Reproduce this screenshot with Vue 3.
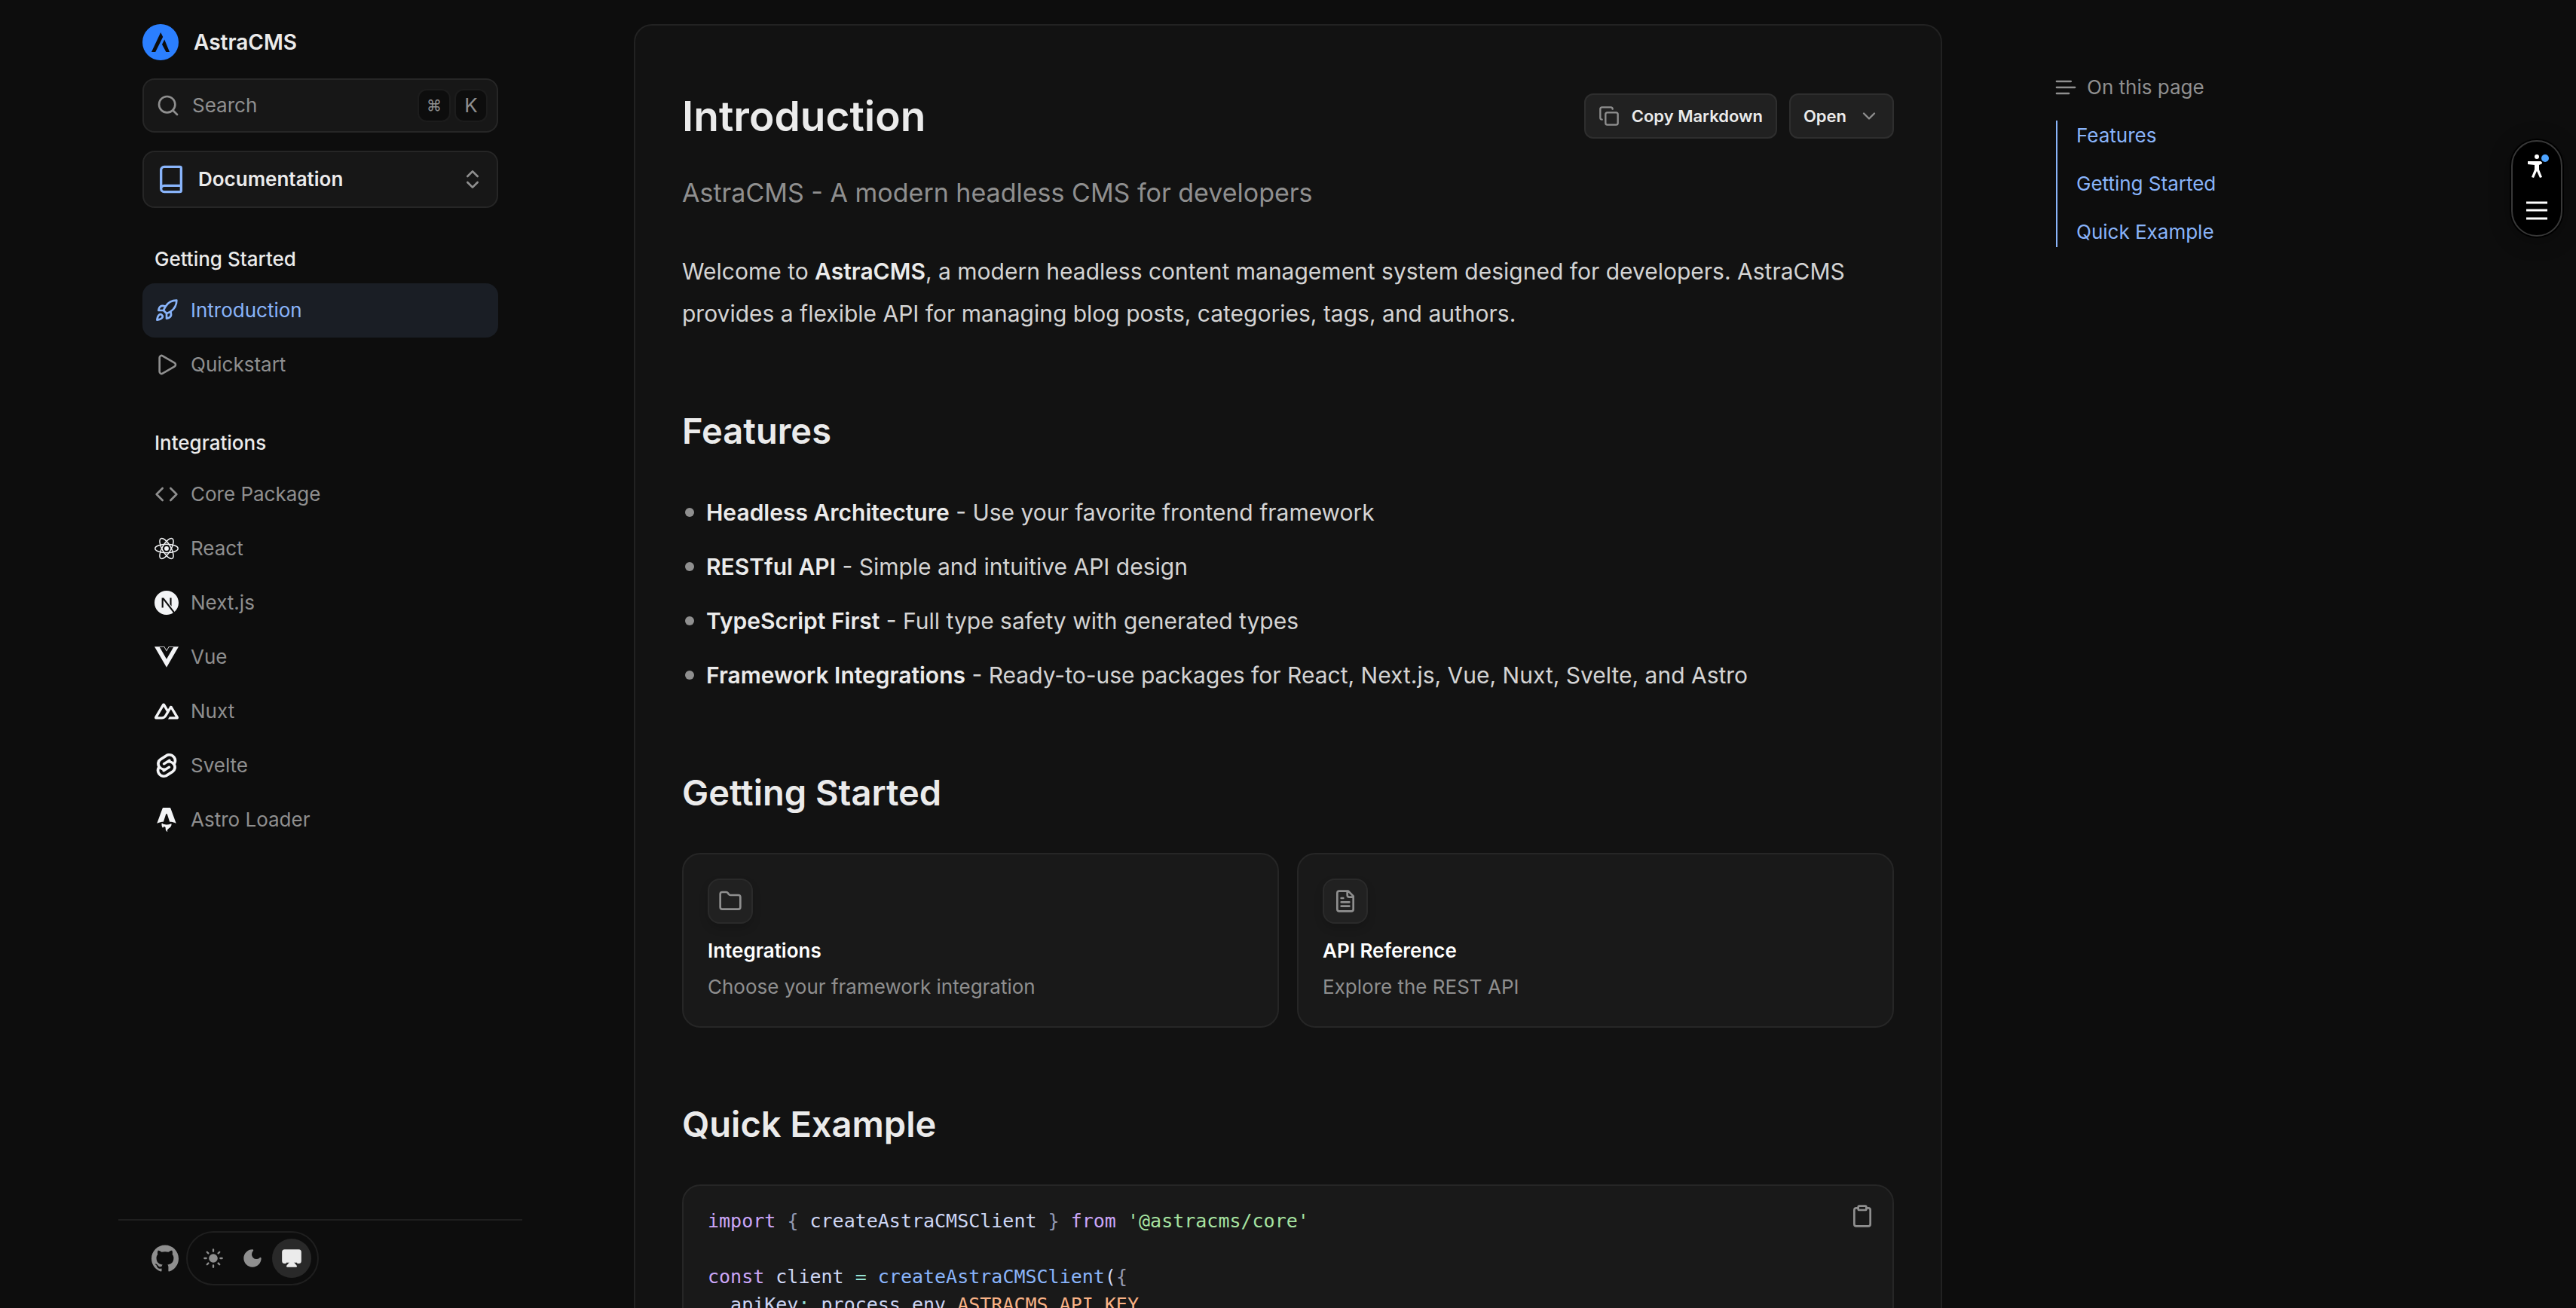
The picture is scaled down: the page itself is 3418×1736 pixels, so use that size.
<template>
  <div class="page">
    <div class="layout">
      <aside class="sidebar">
        <a class="brand" href="#">
          <svg class="logo" viewBox="0 0 48 48" aria-hidden="true">
            <circle cx="24" cy="24" r="24" fill="#2b7fff" />
            <path d="M24.2 11 27.2 17 17.2 37H12ZM29.2 20.5 36 37H31.4L26 27Z" fill="#0d0d0d" />
          </svg>
          <span>AstraCMS</span>
        </a>

        <button class="search" type="button">
          <svg class="icon" viewBox="0 0 24 24"><circle cx="11" cy="11" r="8" /><path d="m21 21-4.34-4.34" /></svg>
          <span class="search-text">Search</span>
          <kbd class="cmd">⌘</kbd>
          <kbd>K</kbd>
        </button>

        <div class="switcher">
          <svg class="icon book" viewBox="0 0 24 24">
            <path d="M4 19.5v-15A2.5 2.5 0 0 1 6.5 2H19a1 1 0 0 1 1 1v18a1 1 0 0 1-1 1H6.5a1 1 0 0 1 0-5H20" />
          </svg>
          <select v-model="section" aria-label="Section">
            <option>Documentation</option>
          </select>
          <svg class="icon" viewBox="0 0 24 24"><path d="m7 15 5 5 5-5M7 9l5-5 5 5" /></svg>
        </div>

        <nav v-for="group in groups" :key="group.title" class="group">
          <h4>{{ group.title }}</h4>
          <a
            v-for="item in group.items"
            :key="item.label"
            href="#"
            class="item"
            :class="{ active: item.label === current }"
          >
            <svg class="icon" :class="{ brandmark: item.fill }" viewBox="0 0 24 24">
              <template v-if="item.label === 'React'">
                <circle cx="12" cy="12" r="2.2" />
                <g fill="none" stroke="currentColor" stroke-width="1.1">
                  <ellipse cx="12" cy="12" rx="11.4" ry="4.3" />
                  <ellipse cx="12" cy="12" rx="11.4" ry="4.3" transform="rotate(60 12 12)" />
                  <ellipse cx="12" cy="12" rx="11.4" ry="4.3" transform="rotate(120 12 12)" />
                </g>
              </template>
              <path v-else :d="item.icon" />
            </svg>
            <span>{{ item.label }}</span>
          </a>
        </nav>

        <div class="sidebar-footer">
          <a class="github" href="#" aria-label="GitHub">
            <svg viewBox="0 0 24 24">
              <path d="M12 .297c-6.63 0-12 5.373-12 12 0 5.303 3.438 9.8 8.205 11.385.6.113.82-.258.82-.577 0-.285-.01-1.04-.015-2.04-3.338.724-4.042-1.61-4.042-1.61C4.422 18.07 3.633 17.7 3.633 17.7c-1.087-.744.084-.729.084-.729 1.205.084 1.838 1.236 1.838 1.236 1.07 1.835 2.809 1.305 3.495.998.108-.776.417-1.305.76-1.605-2.665-.3-5.466-1.332-5.466-5.93 0-1.31.465-2.38 1.235-3.22-.135-.303-.54-1.523.105-3.176 0 0 1.005-.322 3.3 1.23.96-.267 1.98-.399 3-.405 1.02.006 2.04.138 3 .405 2.28-1.552 3.285-1.23 3.285-1.23.645 1.653.24 2.873.12 3.176.765.84 1.23 1.91 1.23 3.22 0 4.61-2.805 5.625-5.475 5.92.42.36.81 1.096.81 2.22 0 1.606-.015 2.896-.015 3.286 0 .315.21.69.825.57C20.565 22.092 24 17.592 24 12.297c0-6.627-5.373-12-12-12" />
            </svg>
          </a>
          <div class="themes">
            <button
              v-for="t in themes"
              :key="t.name"
              type="button"
              :aria-label="t.name"
              :class="{ on: theme === t.name }"
              @click="theme = t.name"
            >
              <svg viewBox="0 0 24 24"><path :d="t.icon" /></svg>
            </button>
          </div>
        </div>
      </aside>

      <main class="content">
        <article class="card">
          <header class="title-row">
            <h1>Introduction</h1>
            <div class="actions">
              <button type="button">
                <svg class="icon" viewBox="0 0 24 24">
                  <rect x="8" y="8" width="14" height="14" rx="2" />
                  <path d="M4 16c-1.1 0-2-.9-2-2V4c0-1.1.9-2 2-2h10c1.1 0 2 .9 2 2" />
                </svg>
                Copy Markdown
              </button>
              <button type="button">
                Open
                <svg class="icon" viewBox="0 0 24 24"><path d="m6 9 6 6 6-6" /></svg>
              </button>
            </div>
          </header>
          <p class="lead">AstraCMS - A modern headless CMS for developers</p>
          <p class="intro">
            Welcome to <strong>AstraCMS</strong>, a modern headless content management system designed for developers. AstraCMS provides a flexible API for managing blog posts, categories, tags, and authors.
          </p>

          <h2>Features</h2>
          <ul class="features">
            <li v-for="f in features" :key="f.name">
              <span><strong>{{ f.name }}</strong> - {{ f.text }}</span>
            </li>
          </ul>

          <h2>Getting Started</h2>
          <div class="links">
            <a v-for="l in links" :key="l.title" href="#" class="link-card">
              <span class="link-icon">
                <svg class="icon" viewBox="0 0 24 24"><path :d="l.icon" /></svg>
              </span>
              <span class="link-title">{{ l.title }}</span>
              <span class="link-text">{{ l.text }}</span>
            </a>
          </div>

          <h2>Quick Example</h2>
          <div class="code">
            <pre><code><span class="kw">import</span> <span class="pn">{</span> createAstraCMSClient <span class="pn">}</span> <span class="kw">from</span> <span class="str">'@astracms/core'</span>

<span class="kw">const</span> client <span class="op">=</span> <span class="fn">createAstraCMSClient</span>(<span class="pn">{</span>
  apiKey<span class="op">:</span> process.env.<span class="cn">ASTRACMS_API_KEY</span></code></pre>
            <button type="button" class="copy" aria-label="Copy">
              <svg class="icon" viewBox="0 0 24 24">
                <rect x="8" y="2" width="8" height="4" rx="1" />
                <path d="M16 4h2a2 2 0 0 1 2 2v14a2 2 0 0 1-2 2H6a2 2 0 0 1-2-2V6a2 2 0 0 1 2-2h2" />
              </svg>
            </button>
          </div>
        </article>
      </main>

      <aside class="toc">
        <h3>
          <svg class="icon" viewBox="0 0 24 24"><path d="M15 18H3M17 6H3M21 12H3" /></svg>
          On this page
        </h3>
        <nav>
          <a v-for="t in toc" :key="t" href="#">{{ t }}</a>
        </nav>
      </aside>
    </div>

    <div class="widget">
      <button type="button" aria-label="Accessibility">
        <svg viewBox="0 0 32 36">
          <circle cx="16" cy="6" r="3" fill="#fff" />
          <path d="M4 12h19v3l-4 2v6l4 10-3 1-4-9-4 9-3-1 4-10v-6l-9-1z" fill="#fff" />
          <circle cx="27" cy="8" r="7" fill="#000" />
          <circle cx="27" cy="8" r="5" fill="#4da3ff" />
        </svg>
      </button>
      <button type="button" aria-label="Menu">
        <svg viewBox="0 0 32 36">
          <path d="M2 7H30M2 17H30M2 28H30" stroke="#fff" stroke-width="3" />
        </svg>
      </button>
    </div>
  </div>
</template>

<script setup>
import { ref } from 'vue'

const section = ref('Documentation')
const current = ref('Introduction')
const theme = ref('System')

const groups = [
  {
    title: 'Getting Started',
    items: [
      {
        label: 'Introduction',
        icon: 'M4.5 16.5c-1.5 1.26-2 5-2 5s3.74-.5 5-2c.71-.84.7-2.13-.09-2.91a2.18 2.18 0 0 0-2.91-.09zM12 15l-3-3a22 22 0 0 1 2-3.95A12.88 12.88 0 0 1 22 2c0 2.72-.78 7.5-6 11a22.35 22.35 0 0 1-4 2zM9 12H4s.55-3.03 2-4c1.62-1.08 5 0 5 0M12 15v5s3.03-.55 4-2c1.08-1.62 0-5 0-5'
      },
      {
        label: 'Quickstart',
        icon: 'M5 5a2 2 0 0 1 3.008-1.728l11.997 6.998a2 2 0 0 1 .003 3.458l-12 7A2 2 0 0 1 5 19z'
      }
    ]
  },
  {
    title: 'Integrations',
    items: [
      { label: 'Core Package', icon: 'm16 18 6-6-6-6M8 6l-6 6 6 6' },
      { label: 'React', fill: true },
      {
        label: 'Next.js',
        fill: true,
        icon: 'M18.665 21.978C16.758 23.255 14.465 24 12 24 5.377 24 0 18.623 0 12S5.377 0 12 0s12 5.377 12 12c0 3.583-1.574 6.801-4.067 9.001L9.219 7.2H7.2v9.596h1.615V9.251l9.85 12.727Zm-3.332-8.533 1.6 2.061V7.2h-1.6v6.245Z'
      },
      {
        label: 'Vue',
        fill: true,
        icon: 'M24 1.61H14.06L12 5.16 9.94 1.61H0L12 22.39ZM12 14.08 5.16 2.23H9.59L12 6.41l2.41-4.18h4.43Z'
      },
      {
        label: 'Nuxt',
        fill: true,
        icon: 'M13.4642 19.8295h8.9218c.2834 0 .5618-.0723.8072-.2098a1.5899 1.5899 0 0 0 .5908-.5732 1.5293 1.5293 0 0 0 .216-.783 1.529 1.529 0 0 0-.2167-.7828L17.7916 7.4142a1.5904 1.5904 0 0 0-.5907-.573 1.6524 1.6524 0 0 0-.807-.2099c-.2833 0-.5616.0724-.807.2098a1.5904 1.5904 0 0 0-.5907.5731L13.4642 9.99l-2.9954-5.0366a1.5913 1.5913 0 0 0-.591-.573 1.6533 1.6533 0 0 0-.8071-.2098c-.2834 0-.5617.0723-.8072.2097a1.5913 1.5913 0 0 0-.591.573L.2168 17.4808A1.5292 1.5292 0 0 0 0 18.2635c-.0001.2749.0744.545.216.783a1.59 1.59 0 0 0 .5908.5732c.2454.1375.5238.2098.8072.2098h5.6003c2.219 0 3.8554-.9454 4.9813-2.7899l2.7337-4.5922L16.3935 9.99l4.3944 7.382h-5.8586ZM7.123 17.3694l-3.9083-.0009 5.8586-9.8421 2.9232 4.921-1.9572 3.2897c-.7478 1.1967-1.5972 1.6323-2.9163 1.6323z'
      },
      {
        label: 'Svelte',
        fill: true,
        icon: 'M10.354 21.125a4.44 4.44 0 0 1-4.765-1.767 4.109 4.109 0 0 1-.703-3.107 3.898 3.898 0 0 1 .134-.522l.105-.321.287.21a7.21 7.21 0 0 0 2.186 1.092l.208.063-.02.208a1.253 1.253 0 0 0 .226.83 1.337 1.337 0 0 0 1.435.533 1.231 1.231 0 0 0 .343-.15l5.59-3.562a1.164 1.164 0 0 0 .524-.778 1.242 1.242 0 0 0-.211-.937 1.338 1.338 0 0 0-1.435-.533 1.23 1.23 0 0 0-.343.15l-2.133 1.36a4.078 4.078 0 0 1-1.135.499 4.44 4.44 0 0 1-4.765-1.766 4.108 4.108 0 0 1-.702-3.108 3.855 3.855 0 0 1 1.742-2.582l5.589-3.563a4.072 4.072 0 0 1 1.135-.499 4.44 4.44 0 0 1 4.765 1.767 4.109 4.109 0 0 1 .703 3.107 3.943 3.943 0 0 1-.134.522l-.105.321-.286-.21a7.204 7.204 0 0 0-2.187-1.093l-.208-.063.02-.207a1.255 1.255 0 0 0-.226-.831 1.337 1.337 0 0 0-1.435-.532 1.231 1.231 0 0 0-.343.15L8.62 9.368a1.162 1.162 0 0 0-.524.778 1.24 1.24 0 0 0 .211.937 1.338 1.338 0 0 0 1.435.533 1.235 1.235 0 0 0 .344-.151l2.132-1.36a4.067 4.067 0 0 1 1.135-.498 4.44 4.44 0 0 1 4.765 1.766 4.108 4.108 0 0 1 .702 3.108 3.857 3.857 0 0 1-1.742 2.583l-5.589 3.562a4.072 4.072 0 0 1-1.135.499m10.358-17.95C18.484-.015 14.082-.96 10.9 1.068L5.31 4.63a6.412 6.412 0 0 0-2.896 4.295 6.753 6.753 0 0 0 .666 4.336 6.43 6.43 0 0 0-.96 2.396 6.833 6.833 0 0 0 1.168 5.167c2.229 3.19 6.63 4.135 9.812 2.108l5.59-3.562a6.41 6.41 0 0 0 2.896-4.295 6.756 6.756 0 0 0-.665-4.336 6.429 6.429 0 0 0 .958-2.396 6.831 6.831 0 0 0-1.167-5.168Z'
      },
      {
        label: 'Astro Loader',
        fill: true,
        icon: 'M8.358 20.162c-1.186-1.07-1.532-3.316-1.038-4.944.856 1.026 2.043 1.352 3.272 1.535 1.897.283 3.76.177 5.522-.678.202-.098.388-.229.608-.36.166.473.209.95.151 1.437-.14 1.185-.738 2.1-1.688 2.794-.38.277-.782.525-1.175.787-1.205.804-1.531 1.747-1.078 3.119l.044.148a3.158 3.158 0 0 1-1.407-1.188 3.31 3.31 0 0 1-.544-1.815c-.004-.32-.004-.642-.048-.958-.106-.769-.472-1.113-1.161-1.133-.707-.02-1.267.411-1.415 1.09-.012.053-.028.104-.045.165h.002zm-5.961-4.445s3.24-1.575 6.49-1.575l2.451-7.565c.092-.366.36-.614.662-.614.302 0 .57.248.662.614l2.45 7.565c3.85 0 6.491 1.575 6.491 1.575L16.088.727C15.93.285 15.663 0 15.303 0H8.697c-.36 0-.615.285-.784.727l-5.516 14.99z'
      }
    ]
  }
]

const themes = [
  {
    name: 'Light',
    icon: 'M16 12a4 4 0 1 1-8 0 4 4 0 0 1 8 0zM12 2v2M12 20v2M4.93 4.93l1.41 1.41M17.66 17.66l1.41 1.41M2 12h2M20 12h2M6.34 17.66l-1.41 1.41M19.07 4.93l-1.41 1.41'
  },
  { name: 'Dark', icon: 'M12 3a6 6 0 0 0 9 9 9 9 0 1 1-9-9Z' },
  {
    name: 'System',
    icon: 'M5 17H4a2 2 0 0 1-2-2V5a2 2 0 0 1 2-2h16a2 2 0 0 1 2 2v10a2 2 0 0 1-2 2h-1M12 15l5 6H7Z'
  }
]

const features = [
  { name: 'Headless Architecture', text: 'Use your favorite frontend framework' },
  { name: 'RESTful API', text: 'Simple and intuitive API design' },
  { name: 'TypeScript First', text: 'Full type safety with generated types' },
  { name: 'Framework Integrations', text: 'Ready-to-use packages for React, Next.js, Vue, Nuxt, Svelte, and Astro' }
]

const links = [
  {
    title: 'Integrations',
    text: 'Choose your framework integration',
    icon: 'M20 20a2 2 0 0 0 2-2V8a2 2 0 0 0-2-2h-7.9a2 2 0 0 1-1.69-.9L9.6 3.9A2 2 0 0 0 7.93 3H4a2 2 0 0 0-2 2v13a2 2 0 0 0 2 2Z'
  },
  {
    title: 'API Reference',
    text: 'Explore the REST API',
    icon: 'M15 2H6a2 2 0 0 0-2 2v16a2 2 0 0 0 2 2h12a2 2 0 0 0 2-2V7ZM14 2v4a2 2 0 0 0 2 2h4M10 9H8M16 13H8M16 17H8'
  }
]

const toc = ['Features', 'Getting Started', 'Quick Example']
</script>

<style>
body {
  background: #0d0d0d;
}
</style>

<style scoped>
.page {
  height: 100vh;
  overflow: hidden;
  background: #0d0d0d;
  color: #ebebeb;
  font-family: Inter, "Liberation Sans", sans-serif;
  font-size: 26px;
  line-height: 40px;
}
.page * {
  box-sizing: border-box;
}
a {
  color: inherit;
  text-decoration: none;
}
button,
select,
kbd {
  font: inherit;
  color: inherit;
}
h1, h2, h3, h4, p, ul, pre {
  margin: 0;
  padding: 0;
}
.icon {
  flex: none;
  width: 32px;
  height: 32px;
  fill: none;
  stroke: currentColor;
  stroke-width: 2;
  stroke-linecap: round;
  stroke-linejoin: round;
}
.layout {
  display: grid;
  grid-template-columns: 536px minmax(0, 1fr) 536px;
  height: 100%;
  max-width: 3104px;
  margin: 0 auto;
}

/* sidebar */
.sidebar {
  display: flex;
  flex-direction: column;
  height: 100vh;
  padding-top: 32px;
}
.brand {
  display: flex;
  align-items: center;
  gap: 20px;
  margin: 0 32px;
  font-size: 28px;
  font-weight: 600;
}
.logo {
  width: 48px;
  height: 48px;
}
.search,
.switcher {
  display: flex;
  align-items: center;
  gap: 16px;
  margin: 24px 32px 0;
  padding: 0 16px;
  border: 2px solid #262626;
  border-radius: 16px;
  background: #171717;
}
.search {
  gap: 5px;
  height: 72px;
  padding-right: 12px;
  color: #8f8f8f;
  text-align: left;
}
.search-text {
  flex: 1;
  padding-left: 11px;
}
kbd {
  width: 44px;
  height: 44px;
  border: 2px solid #1c1c1c;
  border-radius: 12px;
  background: #0d0d0d;
  text-align: center;
}
.cmd {
  font-size: 20px;
}
.switcher {
  height: 76px;
  color: #8f8f8f;
}
.switcher .book {
  width: 40px;
  height: 40px;
  color: #89b4fa;
}
.switcher select {
  flex: 1;
  padding: 0;
  border: 0;
  appearance: none;
  background: none;
  color: #ebebeb;
  font-weight: 600;
}
.group {
  margin: 48px 32px 0;
}
.group h4 {
  margin: 0 16px 12px;
  font-weight: 500;
}
.item {
  display: flex;
  align-items: center;
  gap: 16px;
  height: 72px;
  padding: 0 16px;
  border-radius: 16px;
  color: #8f8f8f;
}
.item.active {
  background: #1a1e25;
  color: #89b4fa;
}
.icon.brandmark {
  color: #f3f4f6;
  fill: currentColor;
  stroke: none;
}
.sidebar-footer {
  display: flex;
  align-items: center;
  gap: 10px;
  margin-top: auto;
  padding: 14px 44px 30px;
  border-top: 2px solid #1f1f1f;
  color: #8f8f8f;
}
.github svg {
  display: block;
  width: 36px;
  height: 36px;
  fill: currentColor;
}
.themes {
  display: flex;
  padding: 8px;
  border: 2px solid #1f1f1f;
  border-radius: 36px;
}
.themes button {
  display: grid;
  place-items: center;
  width: 52px;
  height: 52px;
  padding: 0;
  border: 0;
  border-radius: 50%;
  background: none;
}
.themes svg {
  width: 28px;
  height: 28px;
  fill: currentColor;
  stroke: currentColor;
  stroke-width: 2;
  stroke-linecap: round;
  stroke-linejoin: round;
}
.themes .on {
  background: #292929;
  color: #ebebeb;
}

/* article */
.content {
  overflow-y: auto;
  padding-top: 32px;
  scrollbar-width: none;
}
.card {
  max-width: 1736px;
  margin: 0 auto;
  padding: 90px 62px;
  border: 2px solid #222;
  border-radius: 24px;
  background: #121212;
}
.title-row {
  display: flex;
  align-items: center;
  justify-content: space-between;
  height: 60px;
}
h1 {
  font-size: 55px;
  font-weight: 600;
}
.actions {
  display: flex;
  gap: 16px;
}
.actions button {
  display: flex;
  align-items: center;
  gap: 16px;
  height: 60px;
  padding: 0 17px;
  border: 2px solid #2e2e2e;
  border-radius: 12px;
  background: #212121;
  font-size: 22px;
  font-weight: 600;
}
.actions .icon {
  width: 28px;
  height: 28px;
  color: #8f8f8f;
}
.lead {
  margin-top: 48px;
  color: #8f8f8f;
  font-size: 34px;
  line-height: 48px;
}
.intro,
.features {
  color: #d4d4d4;
  font-size: 30px;
  line-height: 56px;
}
.intro {
  margin-top: 52px;
}
strong {
  color: #ebebeb;
  font-weight: 600;
}
h2 {
  margin: 96px 0 48px;
  font-size: 47px;
  font-weight: 600;
  line-height: 64px;
}
.features {
  display: grid;
  gap: 16px;
  list-style: none;
}
.features li {
  display: flex;
  align-items: center;
  gap: 16px;
  padding-left: 4px;
}
.features li::before {
  content: "";
  width: 12px;
  height: 12px;
  border-radius: 50%;
  background: #8f8f8f;
}
.links {
  display: grid;
  grid-template-columns: 1fr 1fr;
  gap: 24px;
}
.link-card {
  display: flex;
  flex-direction: column;
  padding: 32px;
  border: 2px solid #262626;
  border-radius: 24px;
  background: #191919;
}
.link-icon {
  display: grid;
  place-items: center;
  width: 60px;
  height: 60px;
  border: 2px solid #2a2a2a;
  border-radius: 16px;
  background: #212121;
  box-shadow: 0 6px 12px rgba(0, 0, 0, 0.15);
  color: #8f8f8f;
}
.link-title {
  margin-top: 16px;
  color: #fff;
  font-weight: 600;
}
.link-text {
  margin-top: 8px;
  color: #8f8f8f;
}
.code {
  display: flex;
  justify-content: space-between;
  align-items: flex-start;
  padding: 24px 24px 28px 32px;
  border: 2px solid #262626;
  border-radius: 24px;
  background: #191919;
}
.code pre {
  padding-top: 4px;
  color: #cdd6f4;
  font-family: "DejaVu Sans Mono", "Liberation Mono", monospace;
  font-size: 25px;
  line-height: 37px;
}
.code code {
  font: inherit;
}
.kw { color: #cba6f7; }
.pn { color: #9399b2; }
.str { color: #a6e3a1; }
.op { color: #94e2d5; }
.fn { color: #89b4fa; }
.cn { color: #fab387; }
.copy {
  padding: 0;
  border: 0;
  background: none;
  color: #8f8f8f;
  line-height: 0;
}

/* table of contents */
.toc {
  padding-top: 96px;
}
.toc h3 {
  display: flex;
  align-items: center;
  gap: 12px;
  color: #8f8f8f;
  font-size: inherit;
  font-weight: 400;
}
.toc nav {
  display: grid;
  gap: 24px;
  margin: 24px 0 0 3px;
  padding-left: 25px;
  border-left: 2px solid #89b4fa;
  color: #89b4fa;
}

/* floating toolbar */
.widget {
  position: fixed;
  top: 186px;
  right: 18px;
  display: flex;
  flex-direction: column;
  align-items: center;
  justify-content: space-between;
  width: 68px;
  height: 128px;
  padding: 14px 0;
  border: 2px solid #383838;
  border-radius: 34px;
  background: #000;
  box-shadow: 0 0 0 2px #000, 0 4px 30px rgba(0, 0, 0, 0.3);
}
.widget button {
  padding: 0;
  border: 0;
  background: none;
  line-height: 0;
}
.widget svg {
  width: 32px;
  height: 36px;
}
</style>
